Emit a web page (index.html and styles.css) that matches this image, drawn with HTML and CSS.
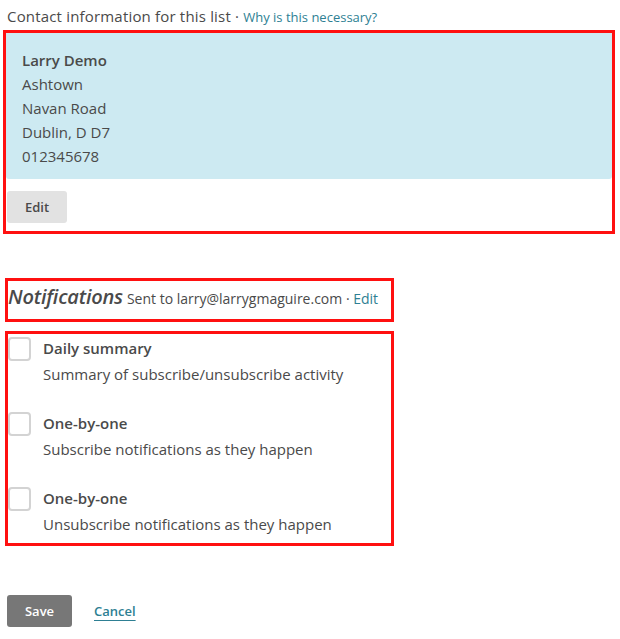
FILE: index.html
```html
<!DOCTYPE html>
<html>
<head>
<meta charset="utf-8">
<link rel="stylesheet" href="styles.css">
</head>
<body>
<div class="page">
  <div class="title">Contact information for this list · <a class="link small" href="#">Why is this necessary?</a></div>
  <div class="frame contact">
    <div class="address">
      <div class="name">Larry Demo</div>
      <div>Ashtown</div>
      <div>Navan Road</div>
      <div>Dublin, D D7</div>
      <div>012345678</div>
    </div>
    <button class="btn-edit">Edit</button>
  </div>

  <div class="frame notif-head">
    <span class="notif-title">Notifications</span>
    <span class="notif-sent">Sent to larry@larrygmaguire.com · <a class="link" href="#">Edit</a></span>
  </div>

  <div class="frame options">
    <div class="option">
      <span class="check"></span>
      <div class="option-text">
        <div class="opt-label">Daily summary</div>
        <div class="opt-desc">Summary of subscribe/unsubscribe activity</div>
      </div>
    </div>
    <div class="option">
      <span class="check"></span>
      <div class="option-text">
        <div class="opt-label">One-by-one</div>
        <div class="opt-desc">Subscribe notifications as they happen</div>
      </div>
    </div>
    <div class="option">
      <span class="check"></span>
      <div class="option-text">
        <div class="opt-label">One-by-one</div>
        <div class="opt-desc">Unsubscribe notifications as they happen</div>
      </div>
    </div>
  </div>

  <div class="actions">
    <button class="btn-save">Save</button>
    <a class="cancel" href="#">Cancel</a>
  </div>
</div>
</body>
</html>
```

FILE: styles.css
```css
* { box-sizing: border-box; }
html, body { margin: 0; padding: 0; background: #fff; }
body {
  font-family: "Open Sans", "Noto Sans", sans-serif;
  color: #4a4a4a;
  font-size: 15px;
}
.page { padding: 5px 0 0 3px; width: 615px; }
.title {
  font-size: 15px;
  letter-spacing: 0.18px;
  line-height: 22px;
  padding-left: 4px;
  margin-bottom: 2px;
}
.link { color: #2e7f93; text-decoration: none; letter-spacing: 0; }
.small { font-size: 13px; }
.frame { border: 3px solid #ff1010; }
.contact { width: 612px; padding: 0 0 8px 0; }
.address {
  background: #cdeaf2;
  padding: 15px 16px 11px 16px;
  line-height: 24px;
  border-radius: 0 0 3px 3px;
}
.name { font-weight: 600; }
.btn-edit {
  margin: 12px 0 0 1px;
  width: 60px;
  height: 32px;
  border: none;
  border-radius: 3px;
  background: #e2e2e2;
  color: #4a4a4a;
  font-family: inherit;
  font-size: 13px;
  font-weight: 600;
  display: block;
}
.notif-head {
  margin-top: 44px;
  margin-left: 2px;
  width: 389px;
  height: 44px;
  padding: 2px 0 0 0;
  display: flex;
  align-items: baseline;
  white-space: nowrap;
}
.notif-title {
  font-style: italic;
  font-weight: 600;
  font-size: 20px;
  margin-right: 4px;
  letter-spacing: -0.2px;
}
.notif-sent { font-size: 14px; }
.options {
  margin-top: 9px;
  margin-left: 2px;
  width: 389px;
  padding: 3px 0 6px 0;
}
.option {
  display: flex;
  align-items: flex-start;
  height: 75px;
}
.option:last-child { height: auto; }
.check {
  width: 23px;
  height: 24px;
  border: 2px solid #d3d3d3;
  border-radius: 4px;
  background: #fff;
  flex: none;
}
.option-text { margin-left: 12px; line-height: 26px; margin-top: -2px; }
.opt-label { font-weight: 600; font-size: 15px; }
.opt-desc { font-size: 15px; }
.actions {
  margin-top: 49px;
  margin-left: 4px;
  display: flex;
  align-items: center;
}
.btn-save {
  width: 65px;
  height: 32px;
  border: none;
  border-radius: 3px;
  background: #777;
  color: #fff;
  font-family: inherit;
  font-size: 13px;
  font-weight: 600;
}
.cancel {
  margin-left: 22px;
  color: #2e7f93;
  font-size: 13px;
  font-weight: 600;
  text-decoration: underline;
  text-underline-offset: 4px;
}
```
